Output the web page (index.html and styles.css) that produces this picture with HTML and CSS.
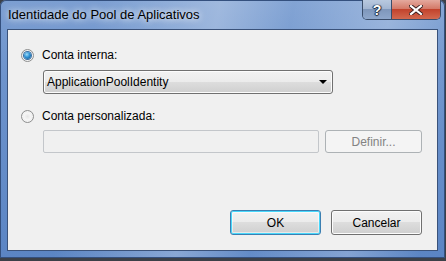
FILE: index.html
```html
<!DOCTYPE html>
<html lang="pt">
  <head>
    <meta charset="UTF-8" />
    <title>Identidade do Pool de Aplicativos</title>
    <link rel="stylesheet" href="styles.css">
  </head>
  <body>
    <div class="window">
      <div class="titlebar">
        <span class="title">Identidade do Pool de Aplicativos</span>
        <div class="caption">
          <span class="cap-btn help">?</span>
          <span class="cap-btn close">
            <svg width="14" height="10" viewBox="0 0 14 10">
              <path d="M2 1 L12 9 M12 1 L2 9" stroke="#3a2020" stroke-width="4" stroke-linecap="square" />
              <path d="M2 1 L12 9 M12 1 L2 9" stroke="#fff" stroke-width="2.2" stroke-linecap="square" />
            </svg>
          </span>
        </div>
      </div>
      <div class="client">
        <label class="radio-row">
          <span class="radio checked"></span>
          <span>Conta interna:</span>
        </label>
        <div class="combo">
          <span>ApplicationPoolIdentity</span>
          <span class="arrow"></span>
        </div>
        <label class="radio-row second">
          <span class="radio"></span>
          <span>Conta personalizada:</span>
        </label>
        <div class="field-row">
          <div class="field"></div>
          <button class="btn disabled">Definir...</button>
        </div>
        <div class="actions">
          <button class="btn default">OK</button>
          <button class="btn">Cancelar</button>
        </div>
      </div>
    </div>
  </body>
</html>
```

FILE: styles.css
```css
* {
  margin: 0;
  padding: 0;
  box-sizing: border-box;
}

body {
  width: 446px;
  height: 261px;
  background: #3b4048;
  font-family: 'Segoe UI', 'Liberation Sans', sans-serif;
  font-size: 12px;
  color: #000;
  overflow: hidden;
}

.window {
  width: 445px;
  height: 258px;
  display: flex;
  flex-direction: column;
  border-radius: 6px 6px 0 0;
  background:
    linear-gradient(100deg, rgba(255,255,255,0) 20%, rgba(255,255,255,.28) 45%, rgba(255,255,255,.05) 60%, rgba(255,255,255,.25) 80%, rgba(255,255,255,0) 95%),
    linear-gradient(180deg, #7c9fd2 0%, #6d93cc 30%, #5b85c4 100%);
  box-shadow: inset 0 0 0 1px #34507e;
}

.titlebar {
  height: 29px;
  display: flex;
  align-items: flex-start;
}

.title {
  padding: 7px 0 0 8px;
  font-size: 13px;
  line-height: 16px;
  text-shadow: 0 0 6px rgba(255,255,255,.9), 0 0 10px rgba(255,255,255,.7);
}

.caption {
  margin-left: auto;
  margin-right: 4px;
  display: flex;
  height: 20px;
  border: 1px solid #3a4d6a;
  border-top: none;
  border-radius: 0 0 5px 5px;
  overflow: hidden;
}

.cap-btn {
  display: flex;
  align-items: center;
  justify-content: center;
}

.help {
  width: 29px;
  border-right: 1px solid #3a4d6a;
  background: linear-gradient(180deg, #b9c9df 0%, #a3b6d2 45%, #7f97bb 50%, #8ea7cb 100%);
  color: #fff;
  font-weight: bold;
  font-size: 14px;
  text-shadow: 0 0 1px #1c2a40, 1px 0 1px #1c2a40, -1px 0 1px #1c2a40, 0 1px 1px #1c2a40;
}

.close {
  width: 48px;
  background: linear-gradient(180deg, #e4a99e 0%, #d47a69 45%, #c2432d 50%, #d2694f 100%);
}

.client {
  flex: 1;
  margin: 0 7px 7px 7px;
  border: 1px solid #3a527a;
  background: #f0f0f0;
  display: flex;
  flex-direction: column;
  padding: 18px 15px 15px 13px;
}

.radio-row {
  display: flex;
  align-items: center;
  height: 14px;
  gap: 8px;
}

.radio-row.second {
  margin-top: 15px;
}

.radio {
  width: 13px;
  height: 13px;
  border-radius: 50%;
  border: 1px solid #8e8f8f;
  background: radial-gradient(circle at 50% 50%, #e6e6e6 0%, #f6f6f6 45%, #d4d4d4 100%);
  box-shadow: inset 0 0 0 1px #f4f4f4;
  position: relative;
}

.radio.checked::after {
  content: '';
  position: absolute;
  left: 2px;
  top: 2px;
  width: 7px;
  height: 7px;
  border-radius: 50%;
  background: radial-gradient(circle at 40% 35%, #a2dcf7 0%, #2f93d6 45%, #0f4c82 100%);
  box-shadow: 0 0 0 1px #3b6ea2;
}

.combo {
  margin: 8px 0 0 22px;
  width: 290px;
  height: 24px;
  border: 1px solid #707070;
  border-radius: 3px;
  background: linear-gradient(180deg, #f2f2f2 0%, #ebebeb 50%, #dddddd 50%, #cfcfcf 100%);
  box-shadow: inset 0 0 0 1px #fcfcfc;
  display: flex;
  align-items: center;
  padding: 0 4px 0 3px;
}

.arrow {
  margin-left: auto;
  width: 0;
  height: 0;
  border-left: 4px solid transparent;
  border-right: 4px solid transparent;
  border-top: 4px solid #000;
  margin-right: 1px;
}

.field-row {
  margin: 7px 0 0 22px;
  display: flex;
  gap: 6px;
}

.field {
  width: 276px;
  height: 23px;
  border: 1px solid #c3c6ca;
  border-radius: 2px;
  background: #f0f0f0;
}

.btn {
  font: inherit;
  width: 97px;
  height: 24px;
  border: 1px solid #707070;
  border-radius: 3px;
  background: linear-gradient(180deg, #f2f2f2 0%, #ebebeb 50%, #dddddd 50%, #cfcfcf 100%);
  box-shadow: inset 0 0 0 1px #fcfcfc;
  color: #000;
}

.btn.disabled {
  height: 23px;
  border-color: #adb2b5;
  background: #f4f4f4;
  box-shadow: none;
  color: #838383;
}

.actions {
  margin-top: auto;
  display: flex;
  justify-content: flex-end;
  gap: 10px;
}

.actions .btn {
  width: 91px;
  height: 25px;
}

.btn.default {
  border-color: #3c7fb1;
  box-shadow: inset 0 0 0 1px #48d7fb, inset 0 0 0 2px rgba(255,255,255,.5);
}
```
